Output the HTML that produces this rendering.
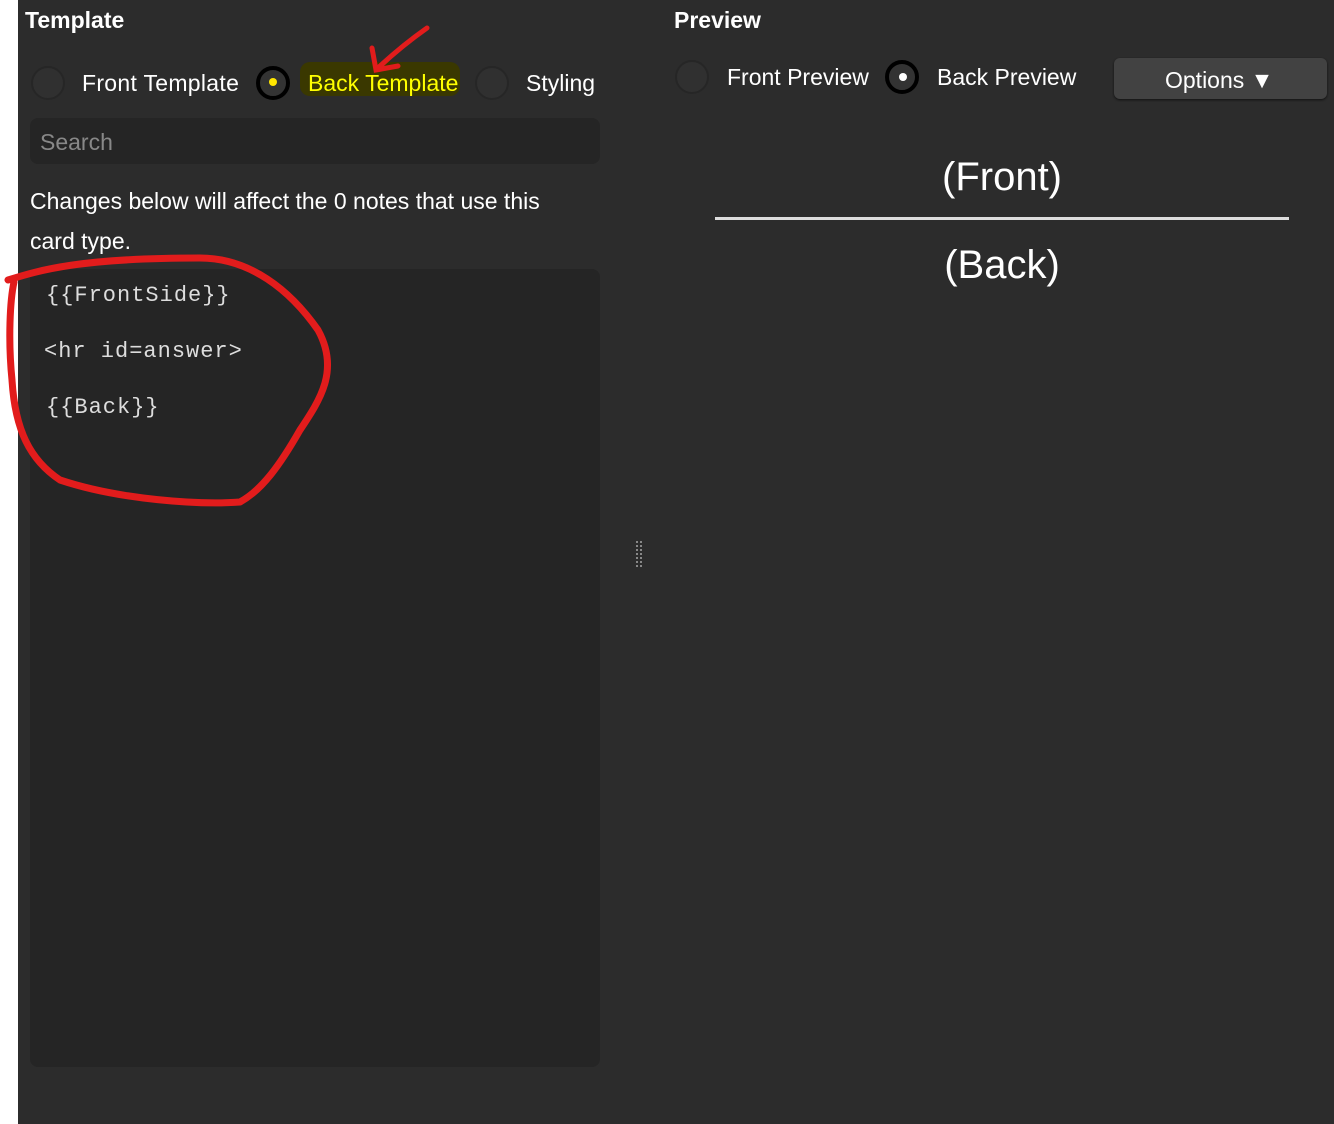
<!DOCTYPE html>
<html><head><style>
body{margin:0;width:1334px;height:1124px;background:#2c2c2c;position:relative;overflow:hidden;font-family:"Liberation Sans",sans-serif;color:#fff}
.a{position:absolute;white-space:nowrap}
.t{font-size:23px}
.r{position:absolute;width:34px;height:34px;border-radius:50%;background:#303030;box-sizing:border-box;border:2px solid #262626}
.mono{font-family:"Liberation Mono",monospace;font-size:22px;color:#ddd;letter-spacing:1px}
</style></head><body>
<div class="a" style="left:0;top:0;width:18px;height:1124px;background:#fff"></div>
<div class="a" style="left:25px;top:7px;font-size:23px;font-weight:bold">Template</div>
<div class="a" style="left:674px;top:7px;font-size:23px;font-weight:bold">Preview</div>

<div class="a" style="left:300px;top:62px;width:160px;height:34px;background:#3a3800;border-radius:10px"></div>
<div class="r" style="left:31px;top:66px"></div>
<div class="a t" style="left:82px;top:70px;letter-spacing:0.3px">Front Template</div>
<div class="r" style="left:256px;top:66px;border:4px solid #000;background:#333"></div>
<div class="a" style="left:269px;top:78px;width:8px;height:8px;border-radius:50%;background:#ffe600"></div>
<div class="a t" style="left:308px;top:70px;color:#ffff00">Back Template</div>
<div class="r" style="left:475px;top:66px"></div>
<div class="a t" style="left:526px;top:70px">Styling</div>

<div class="a" style="left:30px;top:118px;width:570px;height:46px;background:#252525;border-radius:8px"></div>
<div class="a t" style="left:40px;top:129px;color:#888">Search</div>
<div class="a t" style="left:30px;top:181px;line-height:40px;white-space:normal;width:540px">Changes below will affect the 0 notes that use this card type.</div>

<div class="a" style="left:30px;top:269px;width:570px;height:798px;background:#252525;border-radius:8px"></div>
<div class="a mono" style="left:46px;top:283px">{{FrontSide}}</div>
<div class="a mono" style="left:44px;top:339px">&lt;hr id=answer&gt;</div>
<div class="a mono" style="left:46px;top:395px">{{Back}}</div>

<div class="r" style="left:675px;top:60px"></div>
<div class="a t" style="left:727px;top:64px">Front Preview</div>
<div class="r" style="left:885px;top:60px;border:4px solid #000;background:#333"></div>
<div class="a" style="left:899px;top:73px;width:8px;height:8px;border-radius:50%;background:#fff"></div>
<div class="a t" style="left:937px;top:64px">Back Preview</div>
<div class="a" style="left:1114px;top:58px;width:213px;height:41px;background:#424242;border-radius:6px;box-shadow:0 1px 2px #111"></div>
<div class="a t" style="left:1165px;top:67px">Options ▼</div>

<div class="a" style="left:715px;top:155px;width:574px;text-align:center;font-size:40px">(Front)</div>
<div class="a" style="left:715px;top:217px;width:574px;height:3px;background:#ddd"></div>
<div class="a" style="left:715px;top:243px;width:574px;text-align:center;font-size:40px">(Back)</div>

<div class="a" style="left:636px;top:541px;width:2px;height:26px;border-left:2px dotted #888;border-right:2px dotted #888"></div>

<svg class="a" style="left:0;top:0" width="1334" height="1124">
<path d="M8 280 C40 270 80 258 200 258 C250 258 290 290 318 330 C340 370 320 400 300 430 C280 465 262 490 240 502 C200 505 120 500 60 480 C30 460 15 430 12 380 C8 340 10 300 14 282" fill="none" stroke="#e21c1c" stroke-width="7" stroke-linecap="round"/>
<path d="M427 28 C410 40 395 52 378 68 M372 48 L376 70 L398 66" fill="none" stroke="#e21c1c" stroke-width="5" stroke-linecap="round"/>
</svg>
</body></html>
